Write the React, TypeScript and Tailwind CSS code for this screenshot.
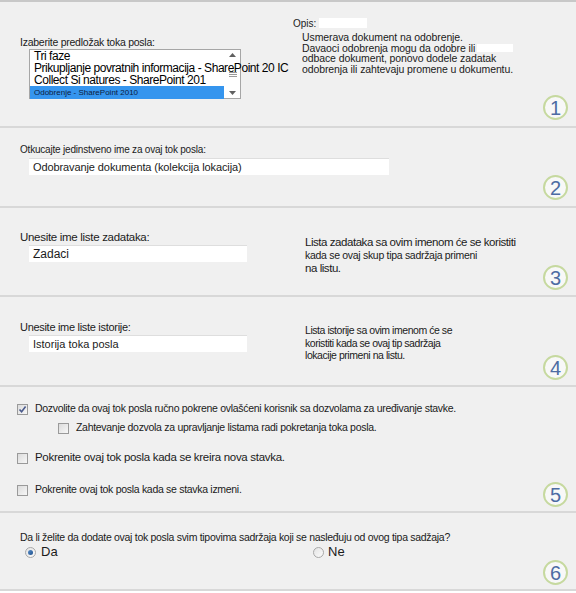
import type { ReactNode } from "react";

const font = { fontFamily: '"Liberation Sans", Arial, sans-serif' };

function Badge({ n, className = "" }: { n: number; className?: string }) {
  return (
    <div
      className={`flex h-[25px] w-[25px] shrink-0 items-center justify-center rounded-full border-2 border-[#c6d99f] bg-[#f8f8f8] text-[20px] leading-none text-[#4d6ca3] ${className}`}
    >
      {n}
    </div>
  );
}

function Check({ checked = false }: { checked?: boolean }) {
  return (
    <span className="flex h-[11px] w-[11px] shrink-0 items-center justify-center border border-[#9a9a9a] bg-gradient-to-br from-[#dcdcdc] to-[#f7f7f7]">
      {checked && (
        <svg width="9" height="9" viewBox="0 0 9 9">
          <path d="M1.5 4.5 L3.6 6.8 L7.6 1.6" fill="none" stroke="#4a5a8c" strokeWidth="1.6" />
        </svg>
      )}
    </span>
  );
}

function Radio({ checked = false }: { checked?: boolean }) {
  return (
    <span className="flex h-[11px] w-[11px] shrink-0 items-center justify-center rounded-full border border-[#a8a8a8] bg-gradient-to-br from-[#e4e4e4] to-[#fbfbfb]">
      {checked && <span className="h-[5px] w-[5px] rounded-full bg-gradient-to-br from-[#5b8fc9] to-[#1d4f8c]" />}
    </span>
  );
}

function Field({ children, w }: { children: ReactNode; w: string }) {
  return (
    <div className={`ml-[9px] flex h-[17px] items-center border-t border-[#dedede] bg-white pl-[4px] ${w}`}>
      {children}
    </div>
  );
}

function Section({ h, children }: { h: string; children: ReactNode }) {
  return <section className={`flex border-b-2 border-[#d8d8d8] ${h}`}>{children}</section>;
}

export default function App() {
  return (
    <div className="w-[576px] border-t-2 border-[#c8c8c8] bg-[#f0f0f0] text-[#1b1b1b]" style={font}>
      {/* 1 */}
      <Section h="h-[126px]">
        <div className="w-[273px] pl-[20px] pt-[34px]">
          <p className="h-[13px] text-[10.5px] leading-[13px] tracking-[-0.25px]">Izaberite predložak toka posla:</p>
          <div className="relative ml-[9px] h-[50px] w-[212px] border border-[#a6a6a6] bg-white">
            <div className="absolute bottom-0 right-0 top-0 flex w-[15px] flex-col items-center justify-between py-[3px]">
              <svg width="7" height="4" viewBox="0 0 7 4"><path d="M0 4 L3.5 0 L7 4Z" fill="#606060" /></svg>
              <div className="flex flex-col gap-[1px]">
                <span className="h-[1px] w-[8px] bg-[#9a9a9a]" />
                <span className="h-[1px] w-[8px] bg-[#9a9a9a]" />
                <span className="h-[1px] w-[8px] bg-[#9a9a9a]" />
              </div>
              <svg width="7" height="4" viewBox="0 0 7 4"><path d="M0 0 L3.5 4 L7 0Z" fill="#606060" /></svg>
            </div>
            <div className="relative whitespace-nowrap text-[12px] leading-[12px] tracking-[-0.45px] text-black">
              <div className="pl-[4px]">Tri faze</div>
              <div className="pl-[4px]">Prikupljanje povratnih informacija - SharePoint 20 IC</div>
              <div className="pl-[4px]">Collect Si natures - SharePoint 201</div>
              <div className="mr-[16px] h-[13px] bg-[#3595ee] pl-[4px] text-[8px] leading-[13px] tracking-normal text-[#0c2040]">
                Odobrenje - SharePoint 2010
              </div>
            </div>
          </div>
        </div>
        <div className="flex-1 pl-[20px] pt-[15px]">
          <p className="flex h-[12px] items-center text-[10px]">
            Opis:<span className="ml-[3px] inline-block h-[10px] w-[48px] bg-white" />
          </p>
          <div className="pl-[9px] pt-[3px] text-[10.5px] leading-[10.5px] tracking-[-0.1px]">
            <p>Usmerava dokument na odobrenje.</p>
            <p className="flex items-center">
              Davaoci odobrenja mogu da odobre ili
              <span className="ml-[2px] inline-block h-[8px] w-[36px] bg-white" />
            </p>
            <p>odbace dokument, ponovo dodele zadatak</p>
            <p>odobrenja ili zahtevaju promene u dokumentu.</p>
          </div>
        </div>
        <Badge n={1} className="mb-[6px] mr-[8px] self-end" />
      </Section>

      {/* 2 */}
      <Section h="h-[80px]">
        <div className="flex-1 pl-[20px] pt-[16px]">
          <p className="h-[14px] text-[10px] leading-[12px] tracking-[-0.2px]">Otkucajte jedinstveno ime za ovaj tok posla:</p>
          <Field w="w-[360px]">
            <span className="text-[11px] tracking-[-0.1px]">Odobravanje dokumenta (kolekcija lokacija)</span>
          </Field>
        </div>
        <Badge n={2} className="mb-[6px] mr-[8px] self-end" />
      </Section>

      {/* 3 */}
      <Section h="h-[89px]">
        <div className="w-[305px] pl-[20px] pt-[23px]">
          <p className="h-[14px] text-[11.5px] leading-[12px] tracking-[-0.3px]">Unesite ime liste zadataka:</p>
          <Field w="w-[218px]">
            <span className="text-[12px]">Zadaci</span>
          </Field>
        </div>
        <div className="flex-1 pt-[28px] text-[11.5px] leading-[13px] tracking-[-0.45px]">
          <p>Lista zadataka sa ovim imenom će se koristiti</p>
          <p className="text-[10.5px] tracking-[-0.3px]">kada se ovaj skup tipa sadržaja primeni</p>
          <p>na listu.</p>
        </div>
        <Badge n={3} className="mb-[5px] mr-[8px] self-end" />
      </Section>

      {/* 4 */}
      <Section h="h-[90px]">
        <div className="w-[305px] pl-[20px] pt-[24px]">
          <p className="h-[14px] text-[11px] leading-[12px] tracking-[-0.3px]">Unesite ime liste istorije:</p>
          <Field w="w-[218px]">
            <span className="text-[11px]">Istorija toka posla</span>
            <span className="ml-[30px] inline-block h-[12px] w-[60px] bg-white" />
          </Field>
        </div>
        <div className="flex-1 pt-[27px] text-[10.5px] leading-[12.5px] tracking-[-0.45px]">
          <p>Lista istorije sa ovim imenom će se</p>
          <p>koristiti kada se ovaj tip sadržaja</p>
          <p>lokacije primeni na listu.</p>
        </div>
        <Badge n={4} className="mb-[5px] mr-[8px] self-end" />
      </Section>

      {/* 5 */}
      <Section h="h-[126px]">
        <div className="flex flex-1 flex-col pl-[17px] pt-[13px] tracking-[-0.3px]">
          <label className="flex h-[18px] items-center gap-[7px] text-[10.5px]">
            <Check checked />
            Dozvolite da ovaj tok posla ručno pokrene ovlašćeni korisnik sa dozvolama za uređivanje stavke.
          </label>
          <label className="ml-[41px] mt-[1px] flex h-[18px] items-center gap-[7px] text-[10.5px]">
            <Check />
            Zahtevanje dozvola za upravljanje listama radi pokretanja toka posla.
          </label>
          <label className="mt-[12px] flex h-[18px] items-center gap-[7px] text-[11.5px]">
            <Check />
            Pokrenite ovaj tok posla kada se kreira nova stavka.
          </label>
          <label className="mt-[14px] flex h-[18px] items-center gap-[7px] text-[10.5px]">
            <Check />
            Pokrenite ovaj tok posla kada se stavka izmeni.
          </label>
        </div>
        <Badge n={5} className="mb-[4px] mr-[8px] self-end" />
      </Section>

      {/* 6 */}
      <Section h="h-[78px]">
        <div className="flex-1 pl-[20px] pt-[18px]">
          <p className="h-[13px] text-[10.5px] leading-[12px] tracking-[-0.3px]">
            Da li želite da dodate ovaj tok posla svim tipovima sadržaja koji se nasleđuju od ovog tipa sadžaja?
          </p>
          <div className="flex h-[16px] items-center text-[13px]">
            <label className="ml-[5px] flex w-[288px] items-center gap-[5px]">
              <Radio checked />
              Da
            </label>
            <label className="flex items-center gap-[4px]">
              <Radio />
              Ne
            </label>
          </div>
        </div>
        <Badge n={6} className="mb-[4px] mr-[8px] self-end" />
      </Section>
      <div className="h-[4px] bg-white" />
    </div>
  );
}
